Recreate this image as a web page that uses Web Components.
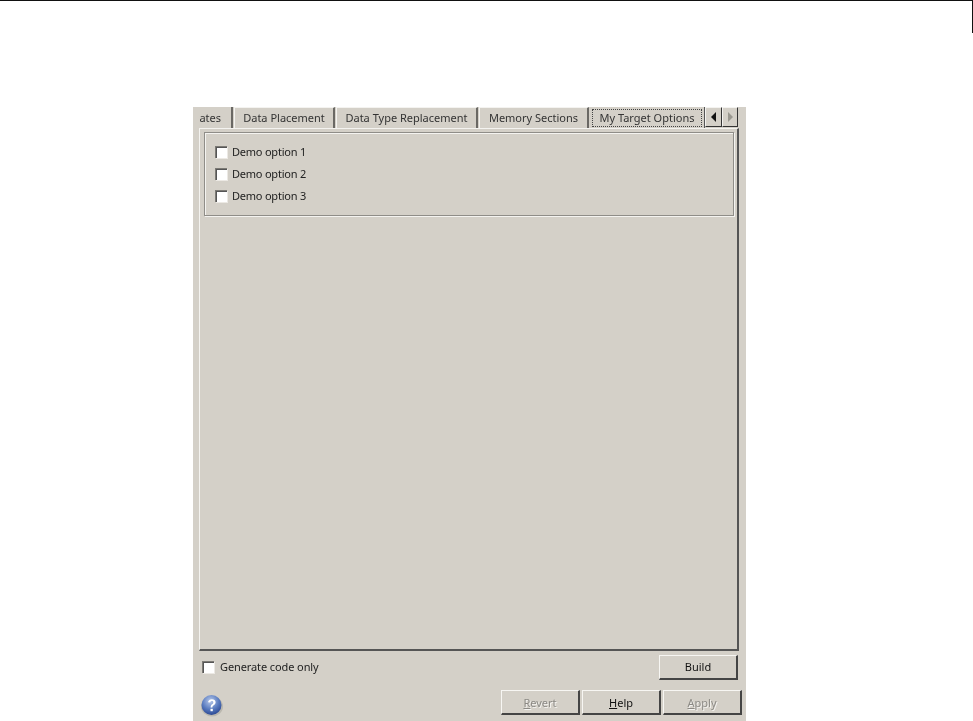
<!DOCTYPE html>
<html>
<head>
<meta charset="utf-8">
<title>My Target Options</title>
<style>
html, body { margin: 0; background: #fff; }
body { font: 11px "Noto Sans", sans-serif; color: #222; }
</style>
</head>
<body>
<doc-page>
  <tool-dialog>
    <tab-strip slot="tabs">
      <tab-item clipped>ates</tab-item>
      <tab-item style="width:101px">Data Placement</tab-item>
      <tab-item style="width:142px">Data Type Replacement</tab-item>
      <tab-item style="width:110px">Memory Sections</tab-item>
      <tab-item active style="width:115px">My Target Options</tab-item>
    </tab-strip>
    <group-box slot="panel">
      <check-row>Demo option 1</check-row>
      <check-row>Demo option 2</check-row>
      <check-row>Demo option 3</check-row>
    </group-box>
    <check-row slot="generate">Generate code only</check-row>
    <win-button slot="build" style="width:79px;padding:0 0 2px">Build</win-button>
    <help-icon slot="help"></help-icon>
    <win-button slot="actions" disabled><u>R</u>evert</win-button>
    <win-button slot="actions"><u>H</u>elp</win-button>
    <win-button slot="actions" disabled><u>A</u>pply</win-button>
  </tool-dialog>
</doc-page>

<script>
function define(name, html) {
  customElements.define(name, class extends HTMLElement {
    constructor() {
      super();
      this.attachShadow({ mode: "open" }).innerHTML = html;
    }
  });
}

// page header rule + the place of the dialog in the page
define("doc-page", `
<style>
  :host { display: block; height: 721px; overflow: hidden; }
  .head { width: 973px; height: 33px; margin-bottom: 74px; box-sizing: border-box; border-top: 1px solid #111; border-right: 1px solid #111; }
  .wrap { padding-left: 193px; }
</style>
<div class="head"></div>
<div class="wrap"><slot></slot></div>`);

define("tool-dialog", `
<style>
  :host { display: flex; flex-direction: column; width: 553px; height: 614px; background: #d4d0c8; box-sizing: border-box; color: #222; font: 11px "Noto Sans", sans-serif; filter: blur(.3px); }
  .top { flex: none; height: 21px; }
  .panel { flex: none; margin-left: 6px; width: 540px; height: 523px; box-sizing: border-box; border-left: 1px solid #f4f3f0; border-top: 1px solid #f4f3f0; border-right: 2px solid #555; border-bottom: 2px solid #555; padding: 3px 3px 0 4px; }
  .row1 { flex: none; display: flex; justify-content: space-between; align-items: flex-start; padding: 4px 8px 0 9px; }
  .row2 { flex: none; display: flex; align-items: flex-start; justify-content: space-between; padding: 10px 4px 0 8px; }
  .actions { display: flex; gap: 2px; }
  ::slotted(check-row) { margin-top: 5px; --label-gap: 6px; letter-spacing: -.1px; }
</style>
<div class="top"><slot name="tabs"></slot></div>
<div class="panel"><slot name="panel"></slot></div>
<div class="row1"><slot name="generate"></slot><slot name="build"></slot></div>
<div class="row2"><slot name="help"></slot><div class="actions"><slot name="actions"></slot></div></div>`);

define("tab-strip", `
<style>
  :host { display: flex; height: 21px; width: 546px; }
  .tabs { display: flex; gap: 1px; flex: none; }
  .scroll { display: flex; height: 20px; }
  .btn { width: 17px; height: 20px; box-sizing: border-box; border-left: 1px solid #f4f3f0; border-top: 1px solid #f4f3f0; border-right: 1px solid #333; border-bottom: 1px solid #333; display: flex; align-items: center; justify-content: center; }
  .btn + .btn { width: 16px; }
</style>
<div class="tabs"><slot></slot></div>
<div class="scroll">
  <div class="btn"><svg width="6" height="10" viewBox="0 0 6 10"><path d="M5 0v10L0 5z" fill="#111"/></svg></div>
  <div class="btn"><svg width="6" height="10" viewBox="0 0 6 10"><path d="M1 0v10l5-5z" fill="#9a9890"/></svg></div>
</div>`);

define("tab-item", `
<style>
  :host { display: flex; align-items: center; justify-content: center; box-sizing: border-box; height: 21px; padding-bottom: 1px; border-top: 1px solid #f4f3f0; border-left: 1px solid #f4f3f0; border-right: 2px solid #6a6864; white-space: nowrap; color: #333; }
  :host([clipped]) { width: 40px; border-left: 0; border-top: 0; justify-content: flex-end; padding-right: 10px; padding-bottom: 0; overflow: hidden; }
  :host([active]) { border-top: 0; border-left: 0; border-right: 1px solid #555; padding: 0; align-items: flex-start; }
  .focus { display: block; }
  :host([active]) .focus { margin-top: 2px; padding: 1px 7px 2px; border: 1px dotted #444; line-height: 13px; }
</style>
<span class="focus"><slot></slot></span>`);

define("group-box", `
<style>
  :host { display: block; width: 530px; height: 84px; box-sizing: border-box; border: 1px solid #8f8d88; box-shadow: inset 1px 1px 0 #f4f3f0, 1px 1px 0 #f4f3f0; padding: 12px 10px 0; }
  .col { display: flex; flex-direction: column; gap: 9px; }
  ::slotted(check-row) { letter-spacing: -.22px; }
</style>
<div class="col"><slot></slot></div>`);

define("check-row", `
<style>
  :host { display: flex; align-items: center; gap: var(--label-gap, 5px); height: 13px; white-space: nowrap; color: #222; }
  .box { width: 12px; height: 12px; box-sizing: border-box; background: #fff; border-top: 1px solid #7c7a75; border-left: 1px solid #7c7a75; box-shadow: inset 1px 1px 0 #555, 1px 1px 0 #ece9e4; }
</style>
<span class="box"></span><span><slot></slot></span>`);

define("win-button", `
<style>
  :host { display: flex; align-items: center; justify-content: center; box-sizing: border-box; width: 79px; height: 25px; background: #d4d0c8; border-top: 1px solid #f7f6f3; border-left: 1px solid #f7f6f3; border-right: 2px solid #444; border-bottom: 2px solid #444; color: #111; padding-top: 1px; }
  :host([disabled]) { color: #8c8a85; text-shadow: 1px 1px 0 #f4f3f0; }
</style>
<span><slot></slot></span>`);

define("help-icon", `
<style>
  :host { display: block; width: 22px; height: 23px; margin-top: 4px; }
</style>
<svg width="22" height="23" viewBox="0 0 22 23">
  <defs>
    <radialGradient id="ball" cx="45%" cy="30%" r="75%">
      <stop offset="0" stop-color="#b8c9ea"/>
      <stop offset="0.55" stop-color="#5a7cc0"/>
      <stop offset="1" stop-color="#24408c"/>
    </radialGradient>
  </defs>
  <ellipse cx="11" cy="12.5" rx="11" ry="10" fill="#a9a69f" opacity=".6"/>
  <circle cx="10.5" cy="11" r="10" fill="url(#ball)"/>
  <path d="M7 8.2c.4-2 2-3 3.9-3 2.2 0 3.7 1.2 3.7 3 0 1.5-.9 2.2-1.9 3-.9.6-1.3 1.1-1.3 2.3H9.6c0-1.7.5-2.5 1.5-3.3.8-.6 1.2-1 1.2-1.8 0-.8-.6-1.3-1.5-1.3-.9 0-1.5.5-1.7 1.5z" fill="#fff"/>
  <rect x="9.5" y="14.8" width="2.3" height="2.4" fill="#fff"/>
</svg>`);
</script>
</body>
</html>
